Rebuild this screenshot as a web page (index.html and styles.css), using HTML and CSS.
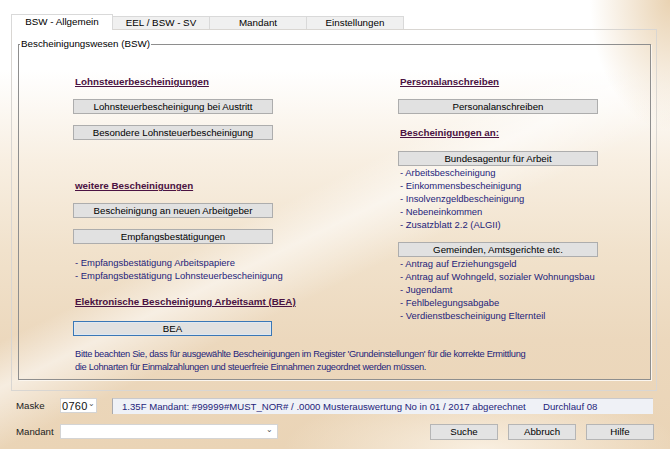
FILE: index.html
```html
<!DOCTYPE html>
<html lang="de">
<head>
<meta charset="utf-8">
<title>BSW - Allgemein</title>
<link rel="stylesheet" href="styles.css">
</head>
<body>
<div class="window">
  <nav class="tabs">
    <div class="tab tab-active">BSW - Allgemein</div>
    <div class="tab">EEL / BSW - SV</div>
    <div class="tab">Mandant</div>
    <div class="tab">Einstellungen</div>
  </nav>

  <section class="panel">
    <fieldset class="group">
      <legend class="group-title">Bescheinigungswesen (BSW)</legend>
      <div class="cols">
        <div class="col">
          <h3 class="head">Lohnsteuerbescheinigungen</h3>
          <button class="btn gap-11">Lohnsteuerbescheinigung bei Austritt</button>
          <button class="btn gap-11">Besondere Lohnsteuerbescheinigung</button>

          <h3 class="head gap-39">weitere Bescheinigungen</h3>
          <button class="btn gap-11">Bescheinigung an neuen Arbeitgeber</button>
          <button class="btn gap-11">Empfangsbestätigungen</button>
          <ul class="list gap-12">
            <li>- Empfangsbestätigung Arbeitspapiere</li>
            <li>- Empfangsbestätigung Lohnsteuerbescheinigung</li>
          </ul>

          <h3 class="head gap-13">Elektronische Bescheinigung Arbeitsamt (BEA)</h3>
          <button class="btn btn-focus gap-13">BEA</button>
        </div>

        <div class="col">
          <h3 class="head">Personalanschreiben</h3>
          <button class="btn gap-11">Personalanschreiben</button>

          <h3 class="head gap-12">Bescheinigungen an:</h3>
          <button class="btn gap-12">Bundesagentur für Arbeit</button>
          <ul class="list">
            <li>- Arbeitsbescheinigung</li>
            <li>- Einkommensbescheinigung</li>
            <li>- Insolvenzgeldbescheinigung</li>
            <li>- Nebeneinkommen</li>
            <li>- Zusatzblatt 2.2 (ALGII)</li>
          </ul>
          <button class="btn gap-11">Gemeinden, Amtsgerichte etc.</button>
          <ul class="list">
            <li>- Antrag auf Erziehungsgeld</li>
            <li>- Antrag auf Wohngeld, sozialer Wohnungsbau</li>
            <li>- Jugendamt</li>
            <li>- Fehlbelegungsabgabe</li>
            <li>- Verdienstbescheinigung Elternteil</li>
          </ul>
        </div>
      </div>

      <p class="note">Bitte beachten Sie, dass für ausgewählte Bescheinigungen im Register 'Grundeinstellungen' für die korrekte Ermittlung<br>die Lohnarten für Einmalzahlungen und steuerfreie Einnahmen zugeordnet werden müssen.</p>
    </fieldset>
  </section>

  <div class="row row-status">
    <span class="label">Maske</span>
    <div class="combo combo-mask"><span class="combo-value">0760</span><span class="chev">&#8964;</span></div>
    <div class="info">
      <span class="info-main">1.35F Mandant: #99999#MUST_NOR# / .0000 Musterauswertung No in 01 / 2017 abgerechnet</span>
      <span>Durchlauf 08</span>
    </div>
  </div>

  <div class="row row-actions">
    <span class="label">Mandant</span>
    <div class="combo combo-client"><span class="combo-value"></span><span class="chev">&#8964;</span></div>
    <div class="actions">
      <button class="btn btn-action">Suche</button>
      <button class="btn btn-action">Abbruch</button>
      <button class="btn btn-action">Hilfe</button>
    </div>
  </div>
</div>
</body>
</html>
```

FILE: styles.css
```css
* {
  box-sizing: border-box;
}

html, body {
  margin: 0;
  padding: 0;
}

body {
  width: 670px;
  height: 449px;
  overflow: hidden;
  font-family: "Liberation Sans", Arial, sans-serif;
  font-size: 9.7px;
  color: #000;
  /* cream wallpaper with a soft light swoosh */
  background:
    radial-gradient(ellipse 80px 130px at 100% 0%, rgba(232, 208, 174, 0.95) 0%, rgba(232, 208, 174, 0) 100%),
    radial-gradient(ellipse 200px 60px at 72% 100%, rgba(255, 250, 242, 0.7) 0%, rgba(255, 250, 242, 0) 100%),
    linear-gradient(154deg, rgba(255, 255, 255, 0) 44%, rgba(255, 255, 255, 0.55) 50%, rgba(255, 255, 255, 0) 58%),
    linear-gradient(180deg, #ffffff 0px, #ffffff 70px, #f8efe2 160px, #f1e2cc 250px, #ecd8bd 340px, #ead4b6 449px);
}

.window {
  display: flex;
  flex-direction: column;
  height: 100%;
}

/* ---- tab strip ---- */
.tabs {
  display: flex;
  align-items: flex-end;
  height: 15px;
  margin: 14px 0 0 11px;
}

.tab {
  width: 98px;
  height: 13px;
  margin-left: -1px;
  border: 1px solid #d9d9d9;
  border-bottom: none;
  background: #f0f0f0;
  text-align: center;
  font-size: 9.8px;
  line-height: 12px;
}

.tab-active {
  position: relative;
  z-index: 1;
  width: 102px;
  height: 16px;
  margin: 0 0 -1px 0;
  background: #fff;
  line-height: 14px;
}

/* ---- tab page ---- */
.panel {
  display: flex;
  flex-direction: column;
  width: 646px;
  height: 362px;
  margin-left: 11px;
  padding: 8px 5px 10px 6px;
  border: 1px solid #d9d6d2;
}

.group {
  flex: 1;
  margin: 0;
  padding: 0;
  border: 1px solid #8e8e8e;
  box-shadow: 1px 1px 0 #fbf6ef;
  min-width: 0;
}

.group-title {
  padding: 0 1px;
  margin-left: 1px;
  font-size: 9.8px;
  line-height: 12px;
}

.cols {
  display: grid;
  grid-template-columns: 325px 1fr;
  padding: 25px 0 0 54px;
}

.col {
  display: flex;
  flex-direction: column;
  align-items: flex-start;
}

.head {
  margin: 0 0 0 2px;
  font-size: 9.8px;
  line-height: 13px;
  font-weight: bold;
  color: #4a1242;
  text-decoration: underline;
  text-underline-offset: 1px;
}

.btn {
  width: 200px;
  height: 15px;
  padding: 0;
  border: 1px solid #adadad;
  background: #e1e1e1;
  font-family: inherit;
  font-size: 9.7px;
  line-height: 13px;
  color: #000;
  text-align: center;
}

.btn-focus {
  width: 199px;
  border-color: #3a77b6;
  box-shadow: inset 0 0 0 1px #dfe8f1;
}

.list {
  list-style: none;
  margin: 0 0 0 2px;
  padding: 0;
  font-size: 9.45px;
  color: #24237a;
  line-height: 13px;
  white-space: nowrap;
}

.gap-11 { margin-top: 11px; }
.gap-12 { margin-top: 12px; }
.gap-13 { margin-top: 13px; }
.gap-39 { margin-top: 39px; }

.note {
  margin: 12px 0 0 56px;
  font-size: 9.3px;
  letter-spacing: -0.32px;
  color: #24237a;
  line-height: 13px;
  white-space: nowrap;
}

/* ---- bottom rows ---- */
.row {
  display: flex;
  align-items: center;
  padding-left: 16px;
}

.row-status {
  margin-top: 6px;
  height: 17px;
}

.row-actions {
  margin-top: 9px;
  height: 17px;
}

.label {
  width: 44px;
  flex: none;
  color: #222;
}

.combo {
  display: flex;
  flex: none;
  align-items: center;
  justify-content: space-between;
  height: 15px;
  background: #fff;
  border: 1px solid #d4d4d4;
}

.combo-mask {
  width: 37px;
  padding: 0 2px 0 1px;
}

.combo-mask .combo-value {
  font-size: 11px;
  letter-spacing: 0.3px;
  color: #111;
}

.combo-client {
  width: 218px;
  padding: 0 4px 0 2px;
}

.chev {
  font-size: 8px;
  line-height: 8px;
  color: #555;
  margin-top: -3px;
}

.info {
  display: flex;
  flex: none;
  align-items: center;
  width: 541px;
  height: 16px;
  margin-left: 15px;
  padding-left: 9px;
  background: #eff1f6;
  border-top: 1px solid #c9c9cc;
  border-left: 1px solid #a9a9ad;
  font-size: 9.6px;
  color: #24237a;
  white-space: nowrap;
}

.info-main {
  flex: 0 0 421px;
  overflow: hidden;
}

.actions {
  display: flex;
  flex: none;
  gap: 10px;
  margin-left: 152px;
}

.btn-action {
  width: 68px;
  height: 16px;
  background: #e3e3e3;
  border-color: #b5b5b5;
}
```
